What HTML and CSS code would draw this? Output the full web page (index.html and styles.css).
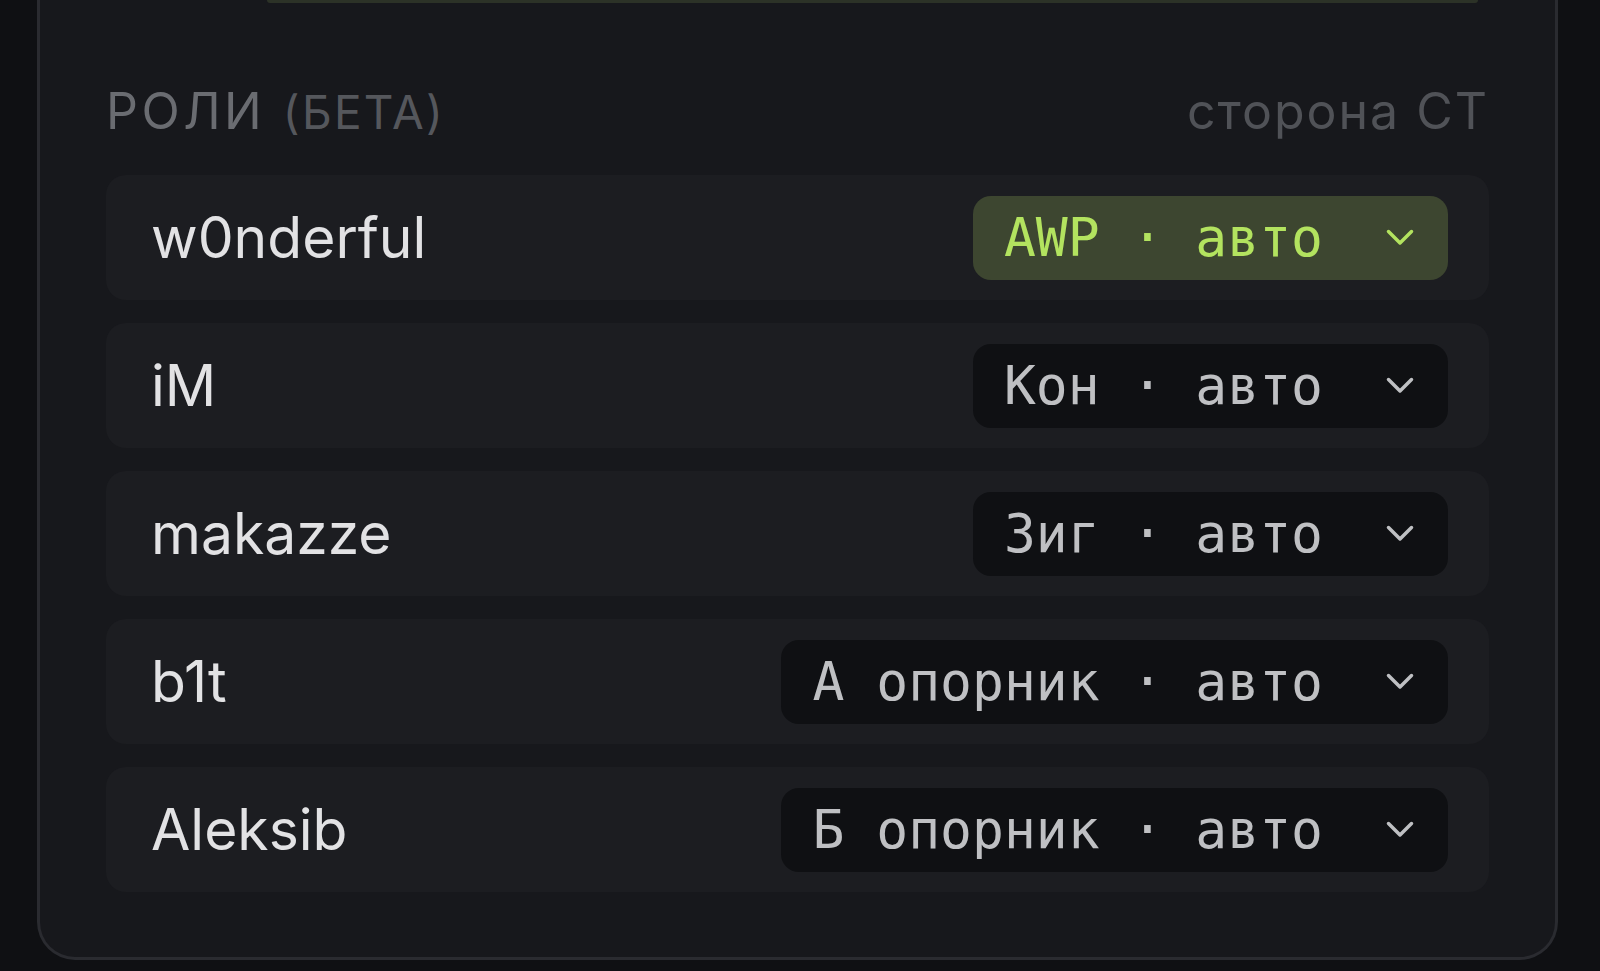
FILE: index.html
```html
<!DOCTYPE html>
<html lang="ru">
<head>
  <meta charset="UTF-8">
  <meta name="viewport" content="width=device-width, initial-scale=1.0">
  <title>Роли</title>
  <link rel="stylesheet" href="styles.css">
</head>
<body>

  <div class="panel">
    <div class="prev-field"></div>

    <div class="roles-head">
      <h3>РОЛИ <span class="beta">(БЕТА)</span></h3>
      <span class="side">сторона CT</span>
    </div>

    <div class="roles">
      <div class="role-row">
        <span class="player">w0nderful</span>
        <button class="role-select active"><span>AWP · авто</span><svg viewBox="0 0 28 17"><polyline points="2.5,2.5 14,14 25.5,2.5"/></svg></button>
      </div>
      <div class="role-row">
        <span class="player">iM</span>
        <button class="role-select"><span>Кон · авто</span><svg viewBox="0 0 28 17"><polyline points="2.5,2.5 14,14 25.5,2.5"/></svg></button>
      </div>
      <div class="role-row">
        <span class="player">makazze</span>
        <button class="role-select"><span>Зиг · авто</span><svg viewBox="0 0 28 17"><polyline points="2.5,2.5 14,14 25.5,2.5"/></svg></button>
      </div>
      <div class="role-row">
        <span class="player">b1t</span>
        <button class="role-select"><span>А опорник · авто</span><svg viewBox="0 0 28 17"><polyline points="2.5,2.5 14,14 25.5,2.5"/></svg></button>
      </div>
      <div class="role-row">
        <span class="player">Aleksib</span>
        <button class="role-select"><span>Б опорник · авто</span><svg viewBox="0 0 28 17"><polyline points="2.5,2.5 14,14 25.5,2.5"/></svg></button>
      </div>
    </div>
  </div>

</body>
</html>
```

FILE: styles.css
```css
* { box-sizing: border-box; }

body {
  margin: 0;
  padding: 0 42px 11px 37px;
  background: #0f1013;
  font-family: 'Inter', 'Noto Sans', sans-serif;
  color: #e2e2e4;
}

.panel {
  background: #17181c;
  border: 3px solid #2a2b30;
  border-top: none;
  border-radius: 0 0 38px 38px;
  padding: 0 66px 65px;
}

.prev-field {
  height: 3px;
  margin: 0 11px 0 161px;
  background: #2c3227;
  border-radius: 0 0 3px 3px;
}

.roles-head {
  display: flex;
  justify-content: space-between;
  align-items: baseline;
  margin: 78px 0 33px;
  line-height: 60px;
}

.roles-head h3 {
  margin: 0;
  font-size: 50px;
  font-weight: 400;
  letter-spacing: 0.07em;
  color: #6a6c71;
}

.beta {
  font-size: 46px;
  letter-spacing: 0.05em;
  color: #55575c;
}

.side {
  font-size: 50px;
  letter-spacing: 0.04em;
  color: #505257;
}

.roles {
  display: flex;
  flex-direction: column;
  gap: 23px;
}

.role-row {
  display: flex;
  align-items: center;
  justify-content: space-between;
  height: 125px;
  padding: 0 41px 0 45px;
  background: #1c1d21;
  border-radius: 20px;
}

.player {
  font-size: 57px;
  color: #e2e2e4;
}

.role-select {
  display: flex;
  align-items: center;
  height: 84px;
  padding: 0 34px 0 31px;
  border: none;
  border-radius: 18px;
  background: #0f1013;
  color: #bfc0c3;
  font-family: 'DejaVu Sans Mono', monospace;
  font-size: 53px;
  line-height: 1;
  cursor: pointer;
}

.role-select span {
  white-space: pre;
}

.role-select svg {
  width: 28px;
  height: 17px;
  margin-left: 63px;
  fill: none;
  stroke: currentColor;
  stroke-width: 3.5;
  stroke-linecap: round;
  stroke-linejoin: round;
}

.role-select.active {
  background: #3d4630;
  color: #b3e35f;
}
```
